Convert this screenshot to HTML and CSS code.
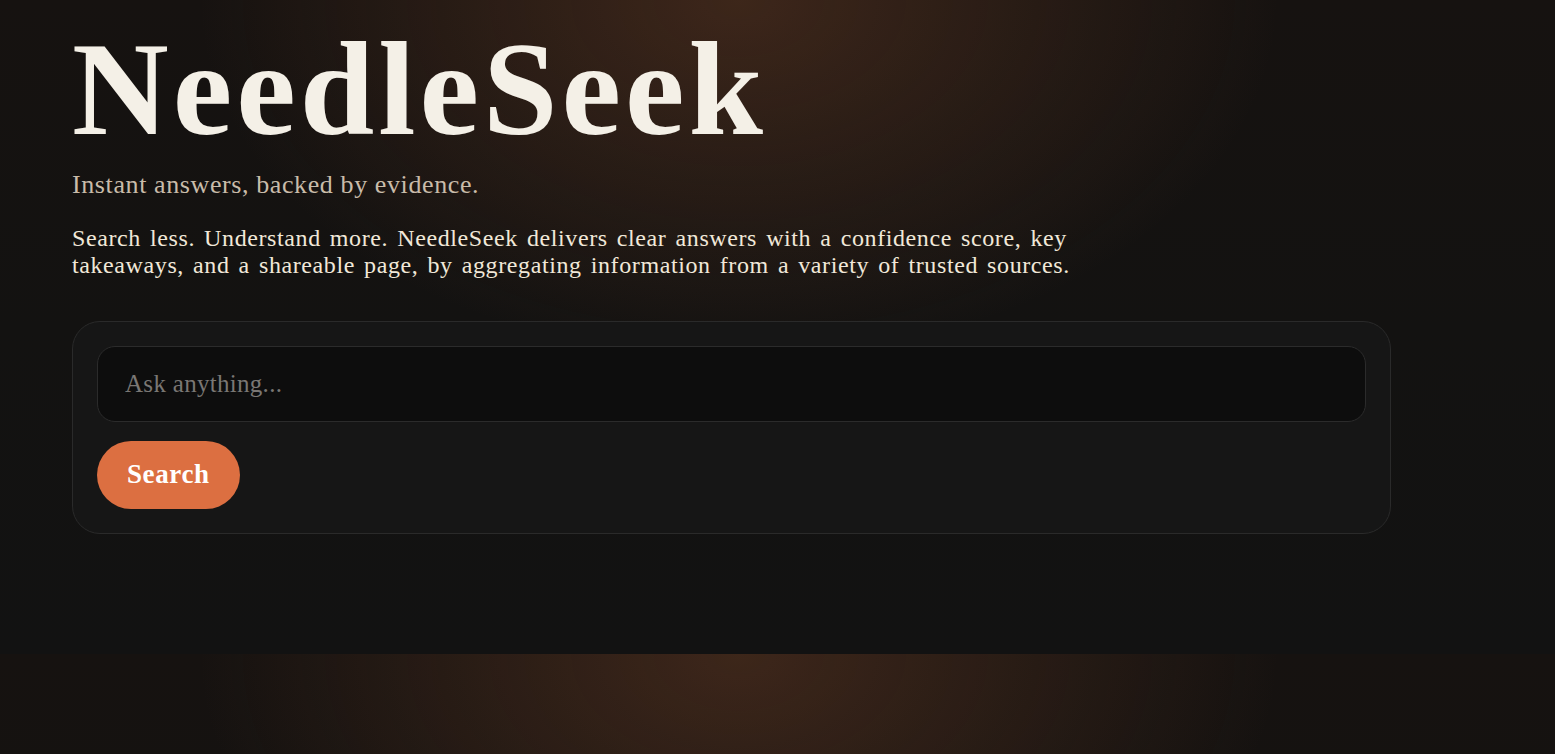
FILE: index.html
```html
<!DOCTYPE html>
<html lang="en">
<head>
<meta charset="UTF-8">
<meta name="viewport" content="width=device-width, initial-scale=1.0">
<title>NeedleSeek</title>
<link rel="stylesheet" href="styles.css">
</head>
<body>
    <main class="hero">
        <h1 class="brand">NeedleSeek</h1>
        <p class="tagline">Instant answers, backed by evidence.</p>
        <p class="intro">Search less. Understand more. NeedleSeek delivers clear answers with a confidence score, key takeaways, and a shareable page, by aggregating information from a variety of trusted sources.</p>

        <!-- Caja de busqueda -->
        <form class="search-card" id="searchForm">
            <input class="search-input" type="text" name="q" placeholder="Ask anything...">
            <div class="search-actions">
                <button class="search-button" type="submit">Search</button>
            </div>
        </form>
    </main>
</body>
</html>
```

FILE: styles.css
```css
/* Fondo general: brillo marron arriba, casi negro abajo */
body {
    margin: 0;
    font-family: Georgia, "Liberation Serif", "Times New Roman", serif;
    color: #f3eee4;
    background:
        radial-gradient(ellipse 540px 360px at 47.5% 0%, rgba(130, 74, 44, 0.36), rgba(130, 74, 44, 0) 100%),
        linear-gradient(180deg, #161210 0%, #131211 50%, #121212 100%);
}

.hero {
    padding: 22px 72px 120px;
    max-width: 1319px;
}

.brand {
    margin: 0;
    font-size: 134px;
    line-height: 1;
    font-weight: bold;
    letter-spacing: 4px;
    color: #f4f0e7;
}

.tagline {
    margin: 12px 0 0;
    font-size: 26px;
    line-height: 1.3;
    letter-spacing: 0.6px;
    color: #c9bcaa;
}

.intro {
    margin: 23px 0 0;
    max-width: 1050px;
    font-size: 24px;
    line-height: 27px;
    letter-spacing: 0.6px;
    word-spacing: 2.5px;
    color: #f1e8d9;
}

/* Tarjeta con el campo y el boton */
.search-card {
    margin-top: 42px;
    padding: 24px;
    background-color: #161616;
    border: 1px solid #2a2a2a;
    border-radius: 28px;
}

.search-input {
    display: block;
    box-sizing: border-box;
    width: 100%;
    height: 76px;
    padding: 0 27px;
    background-color: #0d0d0d;
    border: 1px solid #2b2b2b;
    border-radius: 18px;
    color: #e8e2d8;
    font-family: inherit;
    font-size: 25px;
    letter-spacing: 0.3px;
    outline: none;
}

.search-input::placeholder {
    color: #7a7774;
}

.search-actions {
    margin-top: 19px;
    display: flex;
}

.search-button {
    height: 68px;
    padding: 0 30px;
    background-color: #dc6f41;
    color: #fff;
    border: none;
    border-radius: 34px;
    font-family: inherit;
    font-size: 27px;
    font-weight: bold;
    letter-spacing: 0.6px;
    cursor: pointer;
}

.search-button:hover {
    background-color: #e57c4f;
}
```
